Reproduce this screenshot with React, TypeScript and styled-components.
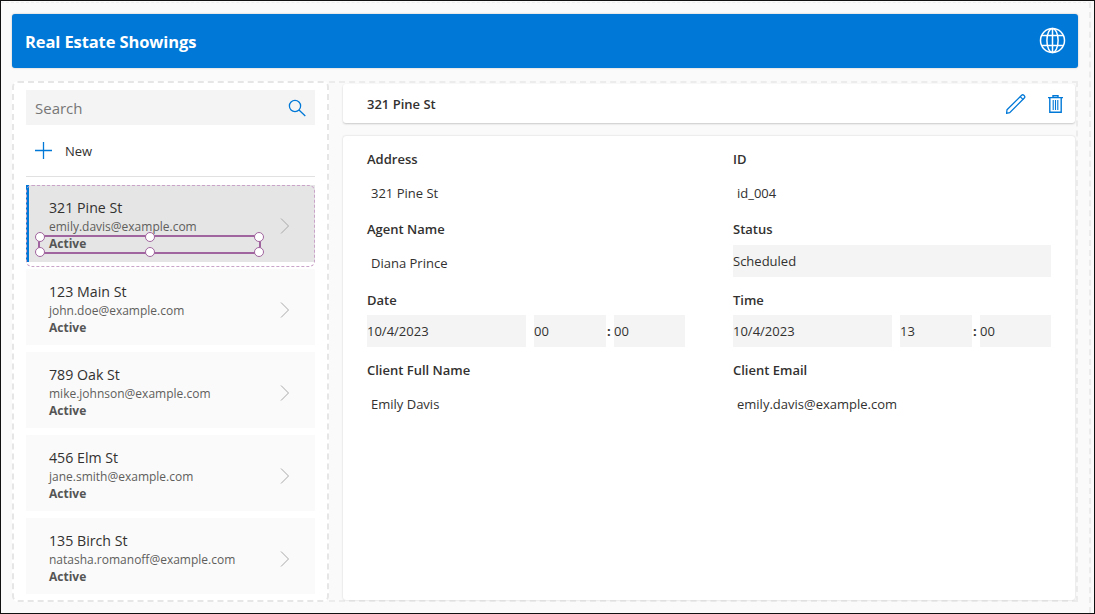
import React from "react";
import styled, { createGlobalStyle } from "styled-components";

const Global = createGlobalStyle`
  html, body { margin: 0; padding: 0; background: #fafafa; }
  * { box-sizing: border-box; }
`;

const Page = styled.div`
  width: 1095px;
  height: 614px;
  border: 1px solid #111;
  background: #fafafa;
  padding: 1px 3px 0 0;
  font-family: "Open Sans", "Noto Sans", sans-serif;
  color: #323130;
  overflow: hidden;
`;

const Frame = styled.div`
  height: 100%;
  border-top: 1px dashed #efefef;
  border-right: 2px dashed #ececec;
  padding: 11px 11px 11px 11px;
  display: flex;
  flex-direction: column;
`;

const Header = styled.header`
  height: 54px;
  flex: none;
  background: #0078d7;
  border-radius: 3px;
  box-shadow: 0 0 2px rgba(0, 0, 0, 0.25);
  display: flex;
  align-items: center;
  justify-content: space-between;
  padding: 0 11px 0 13px;
  color: #fff;
`;

const Title = styled.h1`
  margin: 0;
  font-size: 16.5px;
  font-weight: 700;
  letter-spacing: -0.1px;
`;

const Globe = styled.svg`
  margin: -2px 1px 0 0;
`;

const Main = styled.main`
  margin-top: 13px;
  flex: 1;
  min-height: 0;
  display: grid;
  grid-template-columns: 317px 1fr;
`;

const Sidebar = styled.aside`
  background: #fff;
  border: 2px dashed #e6e6e6;
  border-radius: 6px;
  padding: 7px 12px 0 12px;
  display: flex;
  flex-direction: column;
  overflow: hidden;
`;

const SearchBox = styled.div`
  height: 35px;
  flex: none;
  background: #f4f4f4;
  display: flex;
  align-items: center;
  justify-content: space-between;
  padding: 0 9px 0 9px;
  font-size: 15px;
  color: #777;
`;

const NewRow = styled.div`
  height: 52px;
  flex: none;
  display: flex;
  align-items: center;
  gap: 13px;
  padding: 0 0 0 9px;
  font-size: 13px;
  border-bottom: 1px solid #e1e1e1;
`;

const List = styled.div`
  margin-top: 8px;
  display: flex;
  flex-direction: column;
`;

const Item = styled.div<{ $selected?: boolean }>`
  position: relative;
  flex: none;
  height: ${(p) => (p.$selected ? 77 : 76)}px;
  margin-bottom: 7px;
  background: ${(p) => (p.$selected ? "#e5e5e5" : "#fafafa")};
  border-left: ${(p) => (p.$selected ? "3px solid #0078d7" : "0")};
  padding-left: ${(p) => (p.$selected ? 20 : 23)}px;
  padding-right: 25px;
  display: flex;
  align-items: center;
  justify-content: space-between;
`;

const ItemText = styled.div`
  display: flex;
  flex-direction: column;
  padding-top: 3px;
`;

const ItemTitle = styled.div`
  font-size: 14.2px;
  line-height: 20px;
`;

const ItemEmail = styled.div`
  font-size: 12px;
  line-height: 18px;
  color: #605e5c;
`;

const ItemStatus = styled.div`
  font-size: 12px;
  line-height: 16px;
  font-weight: 700;
  color: #555;
`;

const ChevronIcon = styled.svg`
  margin-top: 5px;
`;

const SelectionDash = styled.div`
  position: absolute;
  left: -3px;
  right: 0;
  top: 0;
  height: 82px;
  border: 1px dashed #c9a3c8;
  border-radius: 6px;
  pointer-events: none;
`;

const SelectionBox = styled.div`
  position: absolute;
  left: 9px;
  top: 50px;
  width: 223px;
  height: 19px;
  border: 2px solid #a0649e;
`;

const Handle = styled.span<{ $x: string; $y: string }>`
  position: absolute;
  left: ${(p) => p.$x};
  top: ${(p) => p.$y};
  width: 10px;
  height: 10px;
  margin: -5px 0 0 -5px;
  border-radius: 50%;
  background: #fff;
  border: 1.5px solid #a0649e;
`;

const Content = styled.section`
  display: flex;
  flex-direction: column;
  padding: 1px 1px 0 14px;
  border: 2px dashed #ececec;
  border-left: 0;
  min-width: 0;
`;

const TopCard = styled.div`
  height: 39px;
  flex: none;
  background: #fff;
  border-radius: 3px;
  box-shadow: 0 1px 2px rgba(0, 0, 0, 0.2);
  display: flex;
  align-items: center;
  justify-content: space-between;
  padding: 0 12px 0 24px;
`;

const TopTitle = styled.div`
  font-size: 13px;
  font-weight: 600;
  padding-top: 1px;
`;

const TopActions = styled.div`
  display: flex;
  align-items: center;
  gap: 22px;
`;

const FormCard = styled.div`
  margin-top: 13px;
  flex: 1;
  background: #fff;
  border-radius: 3px;
  box-shadow: 0 0 2px rgba(0, 0, 0, 0.2);
  padding: 13px 24px 0;
  display: grid;
  grid-template-columns: 366px 318px;
  grid-auto-rows: 70.33px;
`;

const Field = styled.div`
  display: flex;
  flex-direction: column;
`;

const Label = styled.div`
  height: 20px;
  line-height: 20px;
  font-size: 13px;
  font-weight: 600;
`;

const Plain = styled.div`
  margin-top: 8px;
  height: 32px;
  line-height: 32px;
  padding-left: 4px;
  font-size: 13px;
`;

const Filled = styled.div`
  margin-top: 6px;
  height: 32px;
  line-height: 33px;
  background: #f4f4f4;
  font-size: 13px;
`;

const DateRow = styled.div`
  margin-top: 5px;
  display: grid;
  grid-template-columns: 159px 72px 71px;
  column-gap: 8px;
  font-size: 13px;
`;

const Cell = styled.div`
  position: relative;
  height: 32px;
  line-height: 33px;
  background: #f4f4f4;
`;

const Colon = styled.span`
  position: absolute;
  left: -7px;
  top: 0;
  font-weight: 700;
`;

const rows = [
  { title: "123 Main St", email: "john.doe@example.com" },
  { title: "789 Oak St", email: "mike.johnson@example.com" },
  { title: "456 Elm St", email: "jane.smith@example.com" },
  { title: "135 Birch St", email: "natasha.romanoff@example.com" },
];

const GlobeIcon = () => (
  <Globe width="27" height="27" viewBox="0 0 27 27" fill="none" stroke="#fff" strokeWidth="1.5">
    <circle cx="13.5" cy="13.5" r="12" />
    <ellipse cx="13.5" cy="13.5" rx="5.6" ry="12" />
    <path d="M3 8.5h21M3 18.5h21M13.5 1.5v24" />
  </Globe>
);

const SearchIcon = () => (
  <svg width="18" height="18" viewBox="0 0 18 18" fill="none" stroke="#0078d7" strokeWidth="1.3">
    <circle cx="7" cy="7" r="5.6" />
    <path d="M11 11l6.3 6" />
  </svg>
);

const PlusIcon = () => (
  <svg width="17" height="17" viewBox="0 0 17 17" fill="none" stroke="#0078d7" strokeWidth="1.3">
    <path d="M8.5 0v17M0 8.5h17" />
  </svg>
);

const Chevron = () => (
  <ChevronIcon width="10" height="16" viewBox="0 0 10 16" fill="none" stroke="#a8a8a8" strokeWidth="1">
    <path d="M1 .5L8.5 8 1 15.5" />
  </ChevronIcon>
);

const PencilIcon = () => (
  <svg width="20" height="20" viewBox="0 0 20 20" fill="none" stroke="#0078d7" strokeWidth="1.3">
    <path d="M1 15.8L15.6 1.2c.7-.6 1.5-.6 2.2 0l.6.7c.6.7.5 1.5-.1 2.1L3.7 18.6.6 19.3z" />
    <path d="M14.2 2.6l3 3" />
  </svg>
);

const TrashIcon = () => (
  <svg width="15" height="18" viewBox="0 0 15 18" fill="none" stroke="#0078d7" strokeWidth="1.4">
    <path d="M0 2.6h15M5 2.6V.7h5v1.9" />
    <path d="M1.8 2.6v14.7h11.4V2.6" />
    <path d="M5.2 5v10M7.5 5v10M9.8 5v10" strokeWidth="1.1" />
  </svg>
);

export default function App() {
  return (
    <Page>
      <Global />
      <Frame>
        <Header>
          <Title>Real Estate Showings</Title>
          <GlobeIcon />
        </Header>
        <Main>
          <Sidebar>
            <SearchBox>
              Search
              <SearchIcon />
            </SearchBox>
            <NewRow>
              <PlusIcon />
              New
            </NewRow>
            <List>
              <Item $selected>
                <ItemText>
                  <ItemTitle>321 Pine St</ItemTitle>
                  <ItemEmail>emily.davis@example.com</ItemEmail>
                  <ItemStatus>Active</ItemStatus>
                </ItemText>
                <Chevron />
                <SelectionDash />
                <SelectionBox>
                  <Handle $x="0" $y="0" />
                  <Handle $x="50%" $y="0" />
                  <Handle $x="100%" $y="0" />
                  <Handle $x="0" $y="100%" />
                  <Handle $x="50%" $y="100%" />
                  <Handle $x="100%" $y="100%" />
                </SelectionBox>
              </Item>
              {rows.map((r) => (
                <Item key={r.title}>
                  <ItemText>
                    <ItemTitle>{r.title}</ItemTitle>
                    <ItemEmail>{r.email}</ItemEmail>
                    <ItemStatus>Active</ItemStatus>
                  </ItemText>
                  <Chevron />
                </Item>
              ))}
            </List>
          </Sidebar>
          <Content>
            <TopCard>
              <TopTitle>321 Pine St</TopTitle>
              <TopActions>
                <PencilIcon />
                <TrashIcon />
              </TopActions>
            </TopCard>
            <FormCard>
              <Field>
                <Label>Address</Label>
                <Plain>321 Pine St</Plain>
              </Field>
              <Field>
                <Label>ID</Label>
                <Plain>id_004</Plain>
              </Field>
              <Field>
                <Label>Agent Name</Label>
                <Plain>Diana Prince</Plain>
              </Field>
              <Field>
                <Label>Status</Label>
                <Filled>Scheduled</Filled>
              </Field>
              <Field>
                <Label>Date</Label>
                <DateRow>
                  <Cell>10/4/2023</Cell>
                  <Cell>00</Cell>
                  <Cell>
                    <Colon>:</Colon>00
                  </Cell>
                </DateRow>
              </Field>
              <Field>
                <Label>Time</Label>
                <DateRow>
                  <Cell>10/4/2023</Cell>
                  <Cell>13</Cell>
                  <Cell>
                    <Colon>:</Colon>00
                  </Cell>
                </DateRow>
              </Field>
              <Field>
                <Label>Client Full Name</Label>
                <Plain>Emily Davis</Plain>
              </Field>
              <Field>
                <Label>Client Email</Label>
                <Plain>emily.davis@example.com</Plain>
              </Field>
            </FormCard>
          </Content>
        </Main>
      </Frame>
    </Page>
  );
}
